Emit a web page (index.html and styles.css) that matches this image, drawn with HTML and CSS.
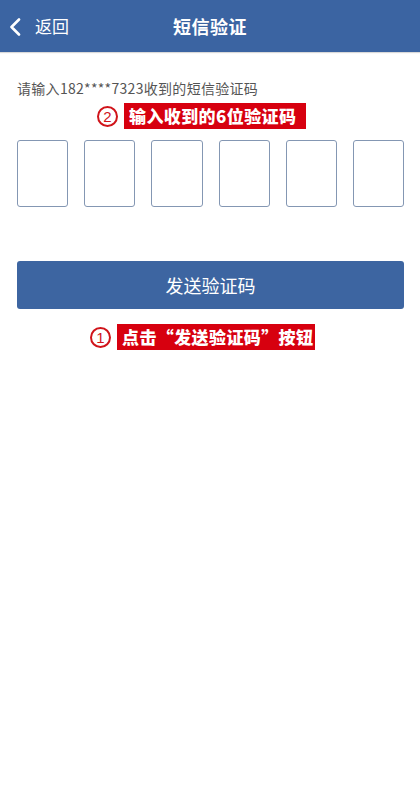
FILE: index.html
```html
<!DOCTYPE html>
<html lang="zh">
<head>
<meta charset="utf-8">
<link rel="stylesheet" href="styles.css">
</head>
<body>
<header class="topbar">
  <div class="back">
    <svg class="chev" viewBox="0 0 12 18" width="12" height="18"><path d="M10 1.5 L2.5 9 L10 16.5" fill="none" stroke="#fff" stroke-width="2.6" stroke-linecap="round" stroke-linejoin="round"/></svg>
    <span class="back-text">返回</span>
  </div>
  <h1 class="title">短信验证</h1>
</header>
<main class="content">
  <p class="prompt">请输入182****7323收到的短信验证码</p>
  <div class="tip tip-two">
    <span class="num">2</span>
    <span class="label">输入收到的6位验证码</span>
  </div>
  <div class="codes">
    <div class="cell"></div>
    <div class="cell"></div>
    <div class="cell"></div>
    <div class="cell"></div>
    <div class="cell"></div>
    <div class="cell"></div>
  </div>
  <button class="send">发送验证码</button>
  <div class="tip tip-one">
    <span class="num">1</span>
    <span class="label">点击“发送验证码”按钮</span>
  </div>
</main>
</body>
</html>
```
FILE: styles.css
```css
html, body {
  margin: 0;
  padding: 0;
  background: #ffffff;
  font-family: "Noto Sans CJK SC", "Noto Sans", sans-serif;
}
.topbar {
  height: 52px;
  background: #3b64a2;
  position: relative;
  display: flex;
  align-items: center;
  justify-content: center;
  box-shadow: 0 1px 1px rgba(0,0,0,0.15);
}
.back {
  position: absolute;
  left: 9px;
  top: 0;
  height: 100%;
  display: flex;
  align-items: center;
  color: #fff;
}
.chev {
  display: block;
  margin-top: 1px;
}
.back-text {
  margin-left: 14px;
  font-size: 17px;
  line-height: 20px;
}
.title {
  margin: 0;
  color: #fff;
  font-size: 18px;
  font-weight: bold;
  letter-spacing: 0.5px;
}
.content {
  display: flex;
  flex-direction: column;
}
.prompt {
  margin: 26px 0 0 17px;
  font-size: 14px;
  line-height: 20px;
  color: #555;
  letter-spacing: 0.3px;
}
.tip {
  display: flex;
  align-items: center;
}
.tip-two {
  margin: 5px 0 0 97px;
}
.tip-one {
  margin: 15px 0 0 90px;
}
.num {
  box-sizing: border-box;
  width: 21px;
  height: 21px;
  border: 2px solid #d0141a;
  border-radius: 50%;
  color: #d0141a;
  font-family: "Liberation Sans", sans-serif;
  font-size: 15px;
  line-height: 17px;
  text-align: center;
  margin-right: 6px;
}
.label {
  background: #d7000f;
  color: #fff;
  font-weight: 900;
  font-size: 17px;
  line-height: 26px;
  height: 26px;
  padding: 0 5px;
  letter-spacing: 0.4px;
  white-space: nowrap;
}
.tip-two .label {
  width: 172px;
}
.tip-one .label {
  width: 188px;
}
.codes {
  display: grid;
  grid-template-columns: repeat(6, 1fr);
  gap: 16px;
  margin: 11px 16px 0 17px;
}
.cell {
  height: 67px;
  box-sizing: border-box;
  border: 1.8px solid #8497b3;
  border-radius: 3px;
}
.send {
  margin: 54px 16px 0 17px;
  height: 48px;
  border: none;
  border-radius: 3px;
  background: #3d65a1;
  color: #fff;
  font-family: "Noto Sans CJK SC", sans-serif;
  font-size: 18px;
  padding: 0;
}
```
